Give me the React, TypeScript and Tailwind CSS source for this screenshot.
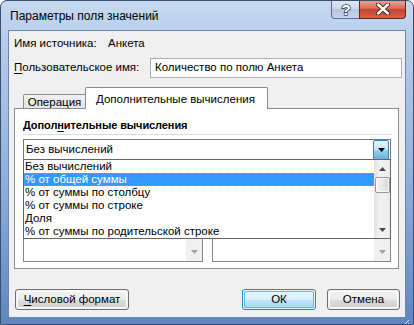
import React from "react";

function Tri({ down = true, color = "#000", size = 7 }: { down?: boolean; color?: string; size?: number }) {
  const h = Math.ceil(size / 2);
  return (
    <svg width={size} height={h} viewBox={`0 0 ${size} ${h}`}>
      {down ? (
        <polygon points={`0,0 ${size},0 ${size / 2},${h}`} fill={color} />
      ) : (
        <polygon points={`0,${h} ${size},${h} ${size / 2},0`} fill={color} />
      )}
    </svg>
  );
}

function U({ children }: { children: React.ReactNode }) {
  return <span className="underline underline-offset-[2px]">{children}</span>;
}

function Button({ children, def = false, w }: { children: React.ReactNode; def?: boolean; w: string }) {
  return (
    <div
      className={`${w} h-[21px] rounded-[3px] border ${
        def ? "border-[#3c7fb1]" : "border-[#707070]"
      } p-px`}
    >
      <div
        className={`h-full w-full rounded-[2px] flex items-center justify-center leading-none whitespace-nowrap ${
          def
            ? "bg-[linear-gradient(to_bottom,#eaf6fd_0%,#d9f0fc_50%,#bee6fd_51%,#a7d9f5_100%)] shadow-[inset_0_0_0_1px_#48c5f4]"
            : "bg-[linear-gradient(to_bottom,#f2f2f2_0%,#ebebeb_50%,#dddddd_51%,#cfcfcf_100%)] shadow-[inset_0_0_0_1px_#fcfcfc]"
        }`}
      >
        {children}
      </div>
    </div>
  );
}

function ListBox({ w }: { w: string }) {
  return (
    <div className={`${w} h-full border border-[#828790] bg-white flex justify-end`}>
      <div className="w-[16px] h-full bg-[#f0f0f0] flex flex-col justify-end items-center pb-[7px]">
        <Tri color="#a3a3a3" size={7} />
      </div>
    </div>
  );
}

export default function App() {
  const items = [
    "Без вычислений",
    "% от общей суммы",
    "% от суммы по столбцу",
    "% от суммы по строке",
    "Доля",
    "% от суммы по родительской строке",
  ];
  return (
    <div className="w-[414px] h-[325px] bg-white">
      <div className="w-[414px] h-[325px] flex flex-col rounded-t-[7px] border border-[#3b4f6d] bg-[linear-gradient(to_bottom,#c6d9f0_0%,#b7cdea_12%,#8fb0dc_55%,#5f86c2_100%)] font-['Liberation_Sans',sans-serif] text-[11.5px] text-black overflow-hidden whitespace-nowrap">
        {/* Title bar */}
        <div className="h-[29px] flex justify-between shrink-0">
          <div className="pl-[9px] pt-[7px] leading-[16px] text-[12px] text-black">
            Параметры поля значений
          </div>
          <div className="flex mr-[7px] h-[19px] -mt-px">
            <div className="w-[28px] h-[19px] rounded-bl-[4px] border border-t-0 border-r-0 border-[#5a6f90] bg-[linear-gradient(to_bottom,#e3ebf5_0%,#c9d7ea_50%,#b3c6df_51%,#c5d5ea_100%)] flex items-center justify-center">
              <svg width="14" height="15" viewBox="0 0 14 15">
                <text
                  x="7"
                  y="13"
                  textAnchor="middle"
                  fontSize="15"
                  fontWeight="bold"
                  fontFamily="Liberation Sans, sans-serif"
                  fill="#fff"
                  stroke="#3a4a62"
                  strokeWidth="1.6"
                  paintOrder="stroke"
                >
                  ?
                </text>
              </svg>
            </div>
            <div className="w-[47px] h-[19px] rounded-br-[4px] border border-t-0 border-[#5a2a20] bg-[linear-gradient(to_bottom,#e8a99b_0%,#d8705c_45%,#c7412b_55%,#d5674a_100%)] flex items-center justify-center">
              <svg width="16" height="12" viewBox="0 0 16 12">
                <path d="M3 1.5 L13 10.5 M13 1.5 L3 10.5" stroke="#3d2018" strokeWidth="4.2" strokeLinecap="round" />
                <path d="M3 1.5 L13 10.5 M13 1.5 L3 10.5" stroke="#fff" strokeWidth="2.4" strokeLinecap="round" />
              </svg>
            </div>
          </div>
        </div>

        {/* Client */}
        <div className="mx-[7px] h-[288px] shrink-0 border border-[#6d85aa] bg-[#f0f0f0] flex flex-col">
          {/* Row 1 */}
          <div className="mt-[4px] h-[16px] leading-[16px] flex pl-[5px]">
            <div className="w-[94px]">Имя источника:</div>
            <div>Анкета</div>
          </div>
          {/* Row 2 */}
          <div className="mt-[7px] h-[20px] flex items-center pl-[5px] pr-[3px]">
            <div className="flex-1">
              <U>П</U>ользовательское имя:
            </div>
            <div className="w-[252px] h-[20px] border border-[#abadb3] bg-white flex items-center pl-[4px] leading-none">
              Количество по полю Анкета
            </div>
          </div>

          {/* Tabs */}
          <div className="mt-[8px] ml-[5px] w-[385px] flex flex-col">
            <div className="h-[22px] flex items-end pl-[9px] relative z-10">
              <div className="w-[63px] h-[14px] border border-b-0 border-[#898c95] rounded-tl-[2px] bg-[linear-gradient(to_bottom,#f2f2f2,#e3e3e3)] flex items-end justify-center leading-[12px] overflow-hidden">
                Операция
              </div>
              <div className="w-[183px] h-[22px] -ml-px border border-b-0 border-[#898c95] rounded-t-[2px] bg-white flex items-start pl-[10px] pt-[4px] leading-[14px] -mb-px">
                Дополнительные вычисления
              </div>
            </div>
            <div className="h-[161px] border border-[#898c95] bg-white relative flex flex-col">
              <div className="mt-[8px] ml-[8px] h-[16px] leading-[16px] font-bold text-[11px] tracking-[-0.1px]">
                Допол<U>н</U>ительные вычисления
              </div>
              <div className="mt-[1px] ml-[8px] w-[369px] h-px bg-[#d5dfe5]" />
              <div className="mt-[4px] ml-[8px] w-[368px] h-[22px] border border-[#7a7a7a] bg-white flex items-center justify-between pl-[2px] pr-px">
                <span className="leading-none">Без вычислений</span>
                <div className="w-[16px] h-[20px] rounded-[2px] border border-[#3c7fb1] bg-[linear-gradient(to_bottom,#e5f4fc_0%,#c4e5f6_50%,#98d1ef_51%,#68b3db_100%)] flex items-center justify-center">
                  <Tri />
                </div>
              </div>
              <div className="mt-[8px] ml-[8px] h-[16px] flex gap-[9px] leading-[16px]">
                <div className="w-[180px]">Базовое поле:</div>
                <div>Базовый элемент:</div>
              </div>
              <div className="mt-[4px] ml-[8px] h-[73px] flex gap-[9px]">
                <ListBox w="w-[180px]" />
                <ListBox w="w-[179px]" />
              </div>

              {/* Dropdown list */}
              <div className="absolute left-[8px] top-[50px] w-[368px] h-[80px] border border-[#646464] bg-white flex z-20">
                <div className="flex-1 flex flex-col overflow-hidden">
                  {items.map((t, i) => (
                    <div
                      key={t}
                      className={`h-[13px] leading-[13px] pl-px whitespace-nowrap overflow-hidden text-[11.5px] ${
                        i === 1
                          ? "bg-[#3399ff] text-white outline outline-1 outline-dotted outline-[#d88a2a] -outline-offset-1"
                          : ""
                      }`}
                    >
                      {t}
                    </div>
                  ))}
                </div>
                <div className="w-[16px] h-full bg-[linear-gradient(to_right,#e3e3e3,#f2f2f2_40%,#ececec)] flex flex-col items-center">
                  <div className="h-[17px] flex items-center justify-center">
                    <Tri down={false} color="#4a4a4a" />
                  </div>
                  <div className="w-[15px] h-[16px] rounded-[2px] border border-[#979797] bg-[linear-gradient(to_right,#f3f3f3,#e8e8e8_50%,#d6d6d6)] shadow-[inset_0_0_0_1px_#fbfbfb]" />
                  <div className="flex-1" />
                  <div className="h-[17px] flex items-center justify-center">
                    <Tri color="#4a4a4a" />
                  </div>
                </div>
              </div>
            </div>
          </div>

          {/* Buttons */}
          <div className="mt-[20px] flex pl-[6px]">
            <Button w="w-[114px]">
              <span>
                <U>Ч</U>исловой формат
              </span>
            </Button>
            <div className="flex-1" />
            <Button w="w-[74px]" def>
              ОК
            </Button>
            <div className="w-[11px]" />
            <Button w="w-[73px]">Отмена</Button>
            <div className="w-[5px]" />
          </div>
        </div>
        <div className="flex-1 flex justify-end items-end pr-[3px] pb-[1px]">
          <svg width="10" height="10" viewBox="0 0 10 10">
            <path d="M9 2 L2 9 M9 5 L5 9 M9 8 L8 9" stroke="#d8e4f2" strokeWidth="1" />
          </svg>
        </div>
      </div>
    </div>
  );
}
